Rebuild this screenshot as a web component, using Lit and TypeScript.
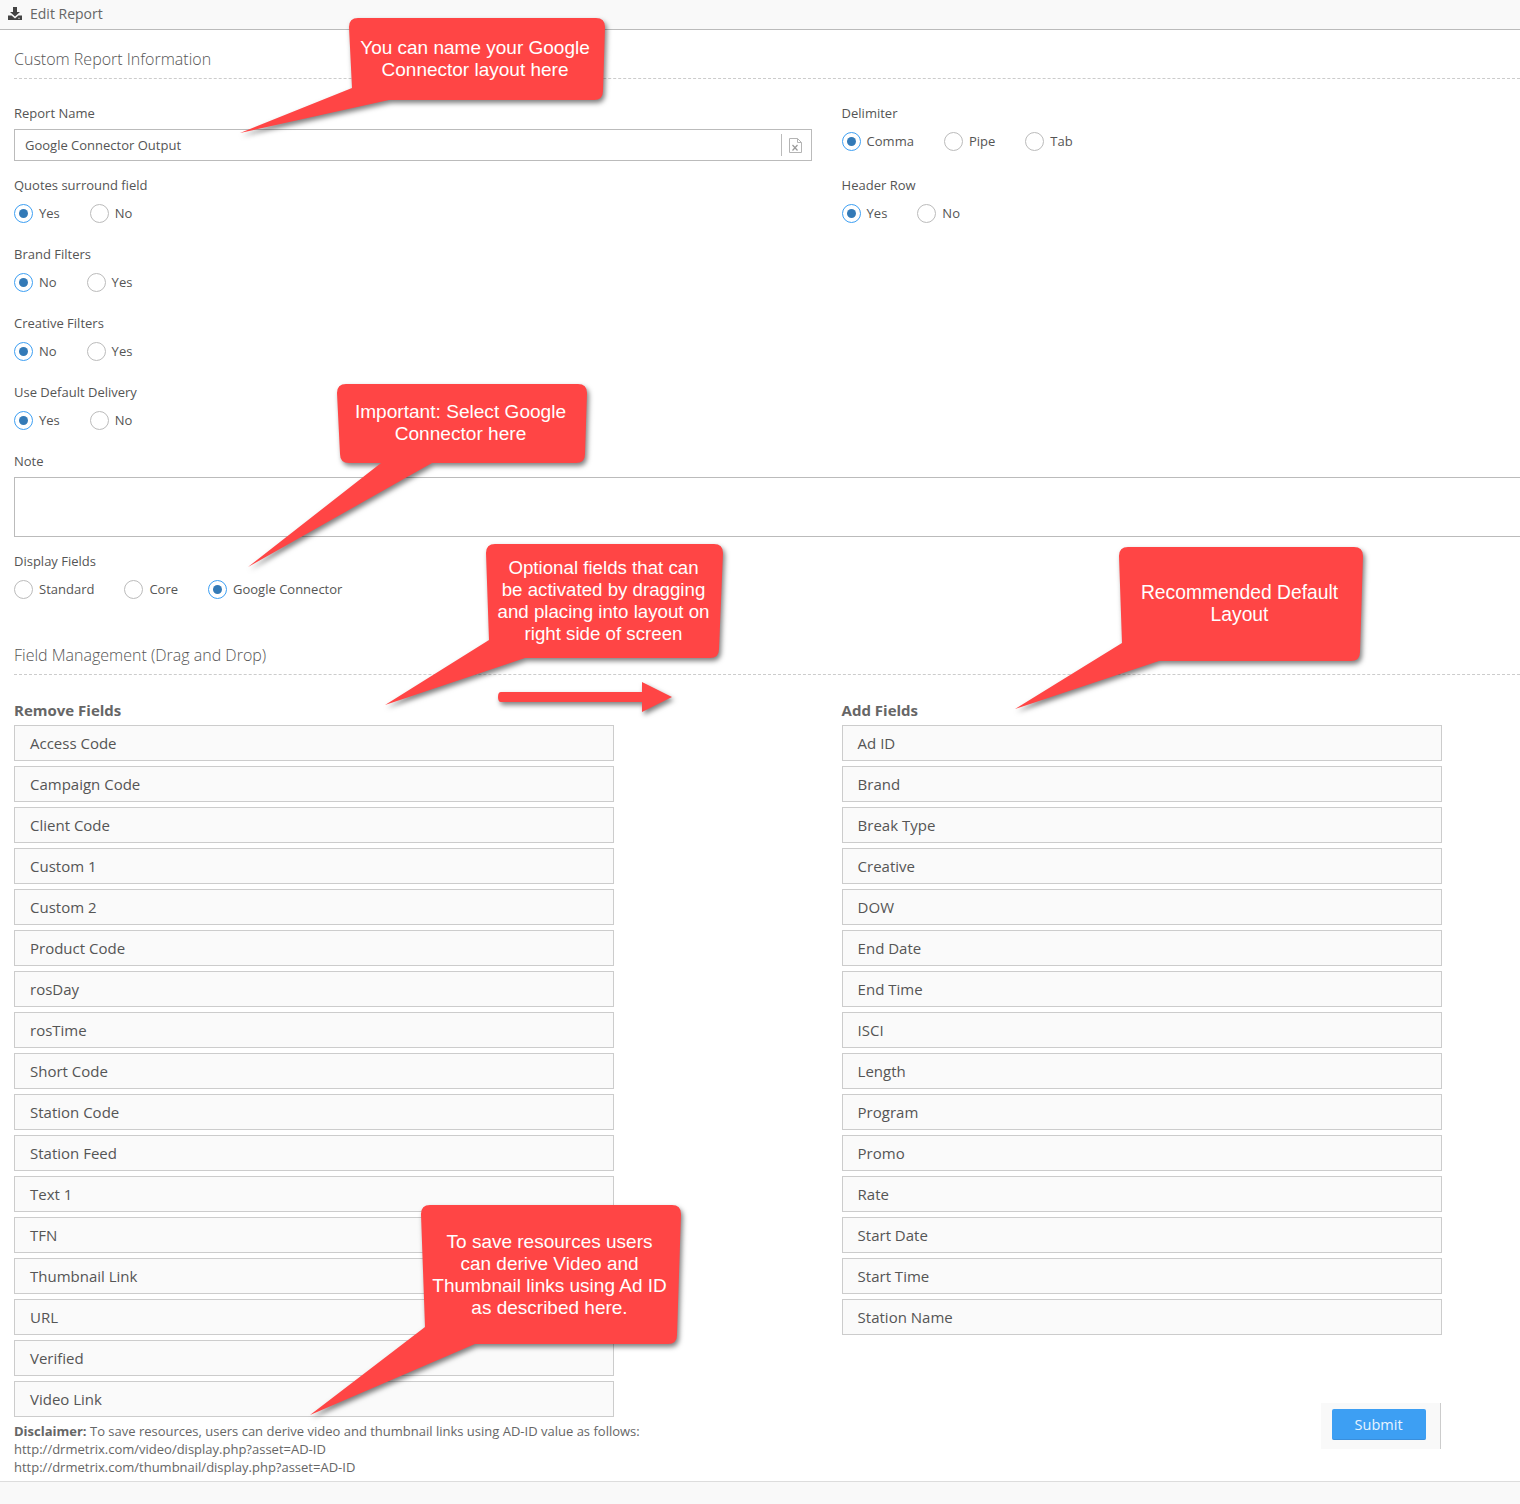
import { LitElement, html, css, svg } from "lit";
import { customElement } from "lit/decorators.js";

type Pt = [number, number];
interface Callout {
  x0: number; x1: number; top: number; bl: number; br: number; bot: number;
  a: Pt; tip: Pt; b: Pt; cx: number; textTop: number; size: number; lines: string[];
}

const CALLOUTS: Callout[] = [
  { x0: 349, x1: 605, top: 18, bl: 352, br: 603, bot: 100, a: [352, 88], tip: [240, 133], b: [389, 100], cx: 475, textTop: 37, size: 19, lines: ["You can name your Google", "Connector layout here"] },
  { x0: 337, x1: 587, top: 384, bl: 340, br: 585, bot: 463, a: [381, 463], tip: [248, 567], b: [432, 463], cx: 460.5, textTop: 401, size: 19.1, lines: ["Important: Select Google", "Connector here"] },
  { x0: 486, x1: 723, top: 544, bl: 489, br: 719, bot: 658, a: [489, 640], tip: [385, 705], b: [525, 658], cx: 603.5, textTop: 557, size: 18.7, lines: ["Optional fields that can", "be activated by dragging", "and placing into layout on", "right side of screen"] },
  { x0: 1119, x1: 1363, top: 547, bl: 1122, br: 1360, bot: 661, a: [1122, 643], tip: [1015, 709], b: [1159, 661], cx: 1239.5, textTop: 582, size: 19.3, lines: ["Recommended Default", "Layout"] },
  { x0: 421, x1: 681, top: 1205, bl: 425, br: 677, bot: 1344, a: [425, 1327], tip: [310, 1415], b: [475, 1344], cx: 549.5, textTop: 1231, size: 19, lines: ["To save resources users", "can derive Video and", "Thumbnail links using Ad ID", "as described here."] },
];

const calloutPath = (c: Callout) => {
  const r = 9;
  // When the tail starts on the bottom edge, the bottom-left corner is still a rounded corner.
  const leftCorner = c.a[1] >= c.bot
    ? `L${c.bl + r} ${c.bot} Q${c.bl} ${c.bot} ${c.bl} ${c.bot - r}`
    : "";
  return `M${c.x0 + r} ${c.top} L${c.x1 - r} ${c.top} Q${c.x1} ${c.top} ${c.x1} ${c.top + r} L${c.br} ${c.bot - r} Q${c.br} ${c.bot} ${c.br - r} ${c.bot} L${c.b[0]} ${c.b[1]} L${c.tip[0]} ${c.tip[1]} L${c.a[0]} ${c.a[1]} ${leftCorner} L${c.x0} ${c.top + r} Q${c.x0} ${c.top} ${c.x0 + r} ${c.top} Z`;
};

const REMOVE = ["Access Code", "Campaign Code", "Client Code", "Custom 1", "Custom 2", "Product Code", "rosDay", "rosTime", "Short Code", "Station Code", "Station Feed", "Text 1", "TFN", "Thumbnail Link", "URL", "Verified", "Video Link"];
const ADD = ["Ad ID", "Brand", "Break Type", "Creative", "DOW", "End Date", "End Time", "ISCI", "Length", "Program", "Promo", "Rate", "Start Date", "Start Time", "Station Name"];

@customElement("app-root")
export class AppRoot extends LitElement {
  static styles = css`
    :host {
      display: block;
      position: relative;
      width: 1520px;
      height: 1504px;
      overflow: hidden;
      background: #fff;
      font-family: "Open Sans", sans-serif;
      color: #555;
      font-size: 13px;
    }
    .topbar {
      display: flex;
      align-items: center;
      gap: 8px;
      padding: 0 0 2px 8px;
      height: 27px;
      background: #f9f9f9;
      border-bottom: 1px solid #bbb;
      font-size: 14px;
      color: #666;
    }
    .topbar svg { display: block; }
    .content { padding-left: 14px; }
    .section {
      font-size: 16px;
      font-weight: 300;
      line-height: 24px;
      padding-bottom: 7px;
      border-bottom: 1px dashed #ccc;
      color: #555;
    }
    .s1 { margin-top: 17px; }
    .s2 { margin-top: 44px; }
    .cols { display: grid; grid-template-columns: 827.6px 1fr; }
    .form { margin-top: 25px; }
    .label { line-height: 18px; color: #555; }
    .group { margin-bottom: 22px; }
    .group .label { margin-bottom: 9px; }
    .group.lead { margin-bottom: 25px; }
    .group.last { margin-bottom: 0; }
    .field { margin-bottom: 15px; }
    .field .label { margin-bottom: 7px; }
    .input {
      box-sizing: border-box;
      width: 798px;
      height: 32px;
      border: 1px solid #bbb;
      display: flex;
      align-items: center;
      padding-left: 10px;
      color: #555;
    }
    .input span { flex: 1; }
    .input .divider { flex: none; width: 1px; height: 22px; background: #bbb; }
    .input svg { display: block; margin: 0 9px 0 7px; }
    .note {
      box-sizing: border-box;
      height: 60px;
      border: 1px solid #bbb;
      border-right: 0;
    }
    .radios { display: flex; height: 20px; align-items: center; gap: 30px; }
    .radio { display: flex; align-items: center; gap: 6px; }
    .dot {
      box-sizing: border-box;
      width: 19px;
      height: 19px;
      border-radius: 50%;
      border: 1px solid #bbb;
      display: flex;
      align-items: center;
      justify-content: center;
    }
    .dot.on { border-color: #3d9ff3; }
    .dot.on::after {
      content: "";
      width: 9px;
      height: 9px;
      border-radius: 50%;
      background: #337ab7;
    }
    .lists { padding-top: 26px; }
    .heading { font-size: 15px; font-weight: 700; line-height: 18px; margin-bottom: 6px; color: #666; }
    .item {
      box-sizing: border-box;
      width: 600px;
      height: 36px;
      margin-bottom: 5px;
      padding-left: 15px;
      display: flex;
      align-items: center;
      font-size: 15px;
      color: #555;
      background: #fafafa;
      border: 1px solid #ccc;
    }
    .disclaimer { font-size: 13px; line-height: 18px; color: #666; }
    .submit-wrap {
      box-sizing: border-box;
      width: 120px;
      height: 46px;
      margin: 68px 0 0 479px;
      padding: 6px 0 0 11px;
      background: #f9f9f9;
      border-right: 1px solid #ccc;
    }
    button {
      display: block;
      width: 94px;
      height: 31px;
      padding: 0;
      border: 0;
      border-bottom: 1px solid #3a8fdc;
      border-radius: 2px;
      background: #3d9ff3;
      color: #e8f4ff;
      font: 14.5px "Open Sans", sans-serif;
    }
    .footer {
      position: absolute;
      left: 0;
      right: 0;
      bottom: 0;
      height: 22px;
      background: #f9f9f9;
      border-top: 1px solid #ddd;
    }
    .overlay { position: absolute; left: 0; top: 0; pointer-events: none; }
    .shape { fill: #ff4545; filter: drop-shadow(2px 3px 2.5px rgba(0, 0, 0, 0.5)); }
    .ctext {
      position: absolute;
      transform: translateX(-50%);
      white-space: nowrap;
      text-align: center;
      font-family: "Liberation Sans", Arial, sans-serif;
      line-height: 22px;
      color: #fff;
    }
  `;

  private radio(name: string, on = false) {
    return html`<div class="radio"><span class="dot ${on ? "on" : ""}"></span><span>${name}</span></div>`;
  }

  private group(label: string, opts: string[], on: string, cls = "") {
    return html`<div class="group ${cls}">
      <div class="label">${label}</div>
      <div class="radios">${opts.map((o) => this.radio(o, o === on))}</div>
    </div>`;
  }

  render() {
    return html`
      <div class="topbar">
        <svg width="14" height="13" viewBox="0 0 14 13">
          <path fill="#444" d="M5 0h4v5h3L7 9.6 2 5h3z" />
          <path fill="#444" d="M0 8.5h3.6L7 11.4l3.4-2.9H14V13H0z" />
          <rect x="10.4" y="10.8" width="1.2" height="1" fill="#fff" />
        </svg>
        <span>Edit Report</span>
      </div>
      <div class="content">
        <div class="section s1">Custom Report Information</div>
        <div class="cols form">
          <div>
            <div class="field">
              <div class="label">Report Name</div>
              <div class="input">
                <span>Google Connector Output</span>
                <i class="divider"></i>
                <svg width="13" height="15" viewBox="0 0 13 15" fill="none" stroke="#b4b4b4">
                  <path d="M.5.5h8l4 4v10H.5z M8.5.5v4h4" />
                  <path d="M3.5 7l5 5.5M8.5 7l-5 5.5" stroke="#999" stroke-width="1.2" />
                </svg>
              </div>
            </div>
            ${this.group("Quotes surround field", ["Yes", "No"], "Yes")}
            ${this.group("Brand Filters", ["No", "Yes"], "No")}
            ${this.group("Creative Filters", ["No", "Yes"], "No")}
            ${this.group("Use Default Delivery", ["Yes", "No"], "Yes")}
          </div>
          <div>
            ${this.group("Delimiter", ["Comma", "Pipe", "Tab"], "Comma", "lead")}
            ${this.group("Header Row", ["Yes", "No"], "Yes")}
          </div>
        </div>
        <div class="field">
          <div class="label">Note</div>
          <div class="note"></div>
        </div>
        ${this.group("Display Fields", ["Standard", "Core", "Google Connector"], "Google Connector", "last")}
        <div class="section s2">Field Management (Drag and Drop)</div>
        <div class="cols lists">
          <div>
            <div class="heading">Remove Fields</div>
            ${REMOVE.map((f) => html`<div class="item">${f}</div>`)}
            <div class="disclaimer">
              <b>Disclaimer:</b> To save resources, users can derive video and thumbnail links using AD-ID value as follows:<br />
              http://drmetrix.com/video/display.php?asset=AD-ID<br />
              http://drmetrix.com/thumbnail/display.php?asset=AD-ID
            </div>
          </div>
          <div>
            <div class="heading">Add Fields</div>
            ${ADD.map((f) => html`<div class="item">${f}</div>`)}
            <div class="submit-wrap"><button>Submit</button></div>
          </div>
        </div>
      </div>
      <div class="footer"></div>
      <svg class="overlay" width="1520" height="1504">
        ${CALLOUTS.map((c) => svg`<path class="shape" d=${calloutPath(c)} />`)}
        <path class="shape" d="M501 692H642V682L672 697 642 712V702H501Q498 702 498 697 498 692 501 692Z" />
      </svg>
      ${CALLOUTS.map(
        (c) => html`<div class="ctext" style="left:${c.cx}px;top:${c.textTop}px;font-size:${c.size}px">
          ${c.lines.map((l) => html`${l}<br />`)}
        </div>`
      )}
    `;
  }
}
